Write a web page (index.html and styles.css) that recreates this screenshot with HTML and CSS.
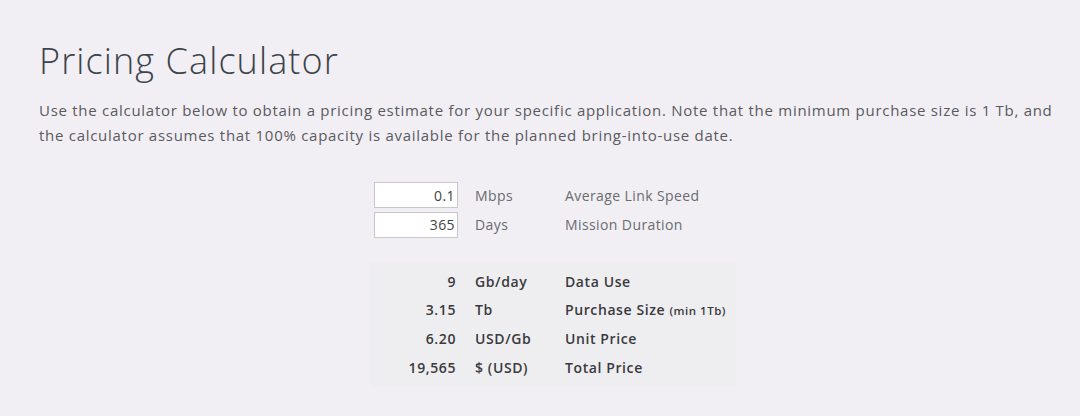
FILE: index.html
```html
<!DOCTYPE html>
<html lang="en">
<head>
    <meta charset="UTF-8">
    <meta name="viewport" content="width=device-width, initial-scale=1.0">
    <title>Pricing Calculator</title>
    <link rel="stylesheet" href="styles.css">
</head>
<body>
    <main class="page">
        <h1>Pricing Calculator</h1>
        <p class="intro">Use the calculator below to obtain a pricing estimate for your specific application. Note that the minimum purchase size is 1 Tb, and the calculator assumes that 100% capacity is available for the planned bring-into-use date.</p>

        <div class="calc">
            <!-- Inputs -->
            <div class="inputs">
                <div class="row">
                    <input class="num-input" type="text" value="0.1">
                    <span class="unit">Mbps</span>
                    <span class="label">Average Link Speed</span>
                </div>
                <div class="row">
                    <input class="num-input" type="text" value="365">
                    <span class="unit">Days</span>
                    <span class="label">Mission Duration</span>
                </div>
            </div>

            <!-- Results -->
            <div class="results">
                <div class="row">
                    <span class="value">9</span>
                    <span class="unit">Gb/day</span>
                    <span class="label">Data Use</span>
                </div>
                <div class="row">
                    <span class="value">3.15</span>
                    <span class="unit">Tb</span>
                    <span class="label">Purchase Size <small>(min 1Tb)</small></span>
                </div>
                <div class="row">
                    <span class="value">6.20</span>
                    <span class="unit">USD/Gb</span>
                    <span class="label">Unit Price</span>
                </div>
                <div class="row">
                    <span class="value">19,565</span>
                    <span class="unit">$ (USD)</span>
                    <span class="label">Total Price</span>
                </div>
            </div>
        </div>
    </main>
</body>
</html>
```

FILE: styles.css
```css
/* General */
body {
    font-family: 'Open Sans', 'Liberation Sans', sans-serif;
    margin: 0;
    padding: 0;
    background-color: #f1eff4;
    color: #555;
    letter-spacing: 0.4px;
}

.page {
    padding: 0 20px 0 39px;
}

h1 {
    margin: 39px 0 0;
    font-size: 36px;
    font-weight: 300;
    line-height: 1.2;
    color: #3d434a;
    letter-spacing: 1.1px;
}

.intro {
    margin: 16px 0 0;
    font-size: 15px;
    line-height: 25px;
    color: #5a5a5f;
    letter-spacing: 0.72px;
}

/* Calculator */
.calc {
    margin: 34px 0 0 335px;
    width: 362px;
}

.row {
    display: grid;
    grid-template-columns: 84px 107px 1fr;
    align-items: center;
    font-size: 14px;
}

.inputs .row {
    height: 26px;
    margin-bottom: 3.5px;
    color: #6b6b70;
}

.inputs .unit {
    padding-left: 17px;
}

.num-input {
    box-sizing: border-box;
    width: 84px;
    height: 26px;
    padding: 0 2px 0 4px;
    border: 1px solid #c8c8cc;
    background: white;
    font-family: inherit;
    font-size: 14px;
    letter-spacing: 0.4px;
    color: #444;
    text-align: right;
}

.results {
    margin: 24px 0 0 -4px;
    padding: 5px 0 6px 4px;
    background-color: #eeeef0;
}

.results .row {
    height: 28.7px;
    font-weight: 600;
    color: #3a3a3e;
    letter-spacing: 0.6px;
}

.results .value {
    text-align: right;
    padding-right: 2px;
}

.results .unit {
    padding-left: 17px;
}

.results small {
    font-size: 11.5px;
    letter-spacing: 0.5px;
}
```
